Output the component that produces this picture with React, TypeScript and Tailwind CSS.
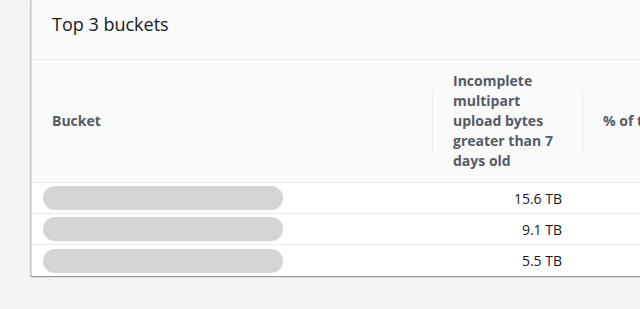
const rows = ["15.6 TB", "9.1 TB", "5.5 TB"];

export default function App() {
  return (
    <div
      className="h-[309px] w-[640px] overflow-hidden bg-[#f2f3f3] pl-[31px]"
      style={{ fontFamily: '"Open Sans", "Noto Sans", sans-serif' }}
    >
      <div className="w-[720px] border-l border-[#d5dbdb] bg-white shadow-[0_1px_1px_0_rgba(0,28,36,0.3),-1px_1px_1px_0_rgba(0,28,36,0.15)]">
        <div className="h-[60px] border-b border-[#eaeded] bg-[#fafafa] px-5 pt-3">
          <h2 className="text-[18px] leading-6 text-[#16191f]">Top 3 buckets</h2>
        </div>

        <div className="flex h-[123px] border-b border-[#eaeded] bg-[#fafafa] text-[14px] font-bold leading-5 text-[#545b64]">
          <div className="flex w-[400px] items-center px-5">Bucket</div>
          <div className="h-[61px] w-px self-center bg-[#eaeded]" />
          <div className="flex w-[149px] items-center px-5">
            Incomplete multipart upload bytes greater than 7 days old
          </div>
          <div className="h-[61px] w-px self-center bg-[#eaeded]" />
          <div className="flex items-center whitespace-nowrap px-5">% of total</div>
        </div>

        {rows.map((value, i) => (
          <div
            key={value}
            className={`flex h-[31px] items-center text-[14px] text-[#16191f] ${
              i < rows.length - 1 ? "border-b border-[#eaeded]" : ""
            }`}
          >
            <div className="w-[401px] pl-[11px]">
              <div className="h-6 w-[240px] rounded-full bg-[#d5d5d5]" />
            </div>
            <div className="w-[150px] pr-[21px] text-right">{value}</div>
          </div>
        ))}
      </div>
    </div>
  );
}
